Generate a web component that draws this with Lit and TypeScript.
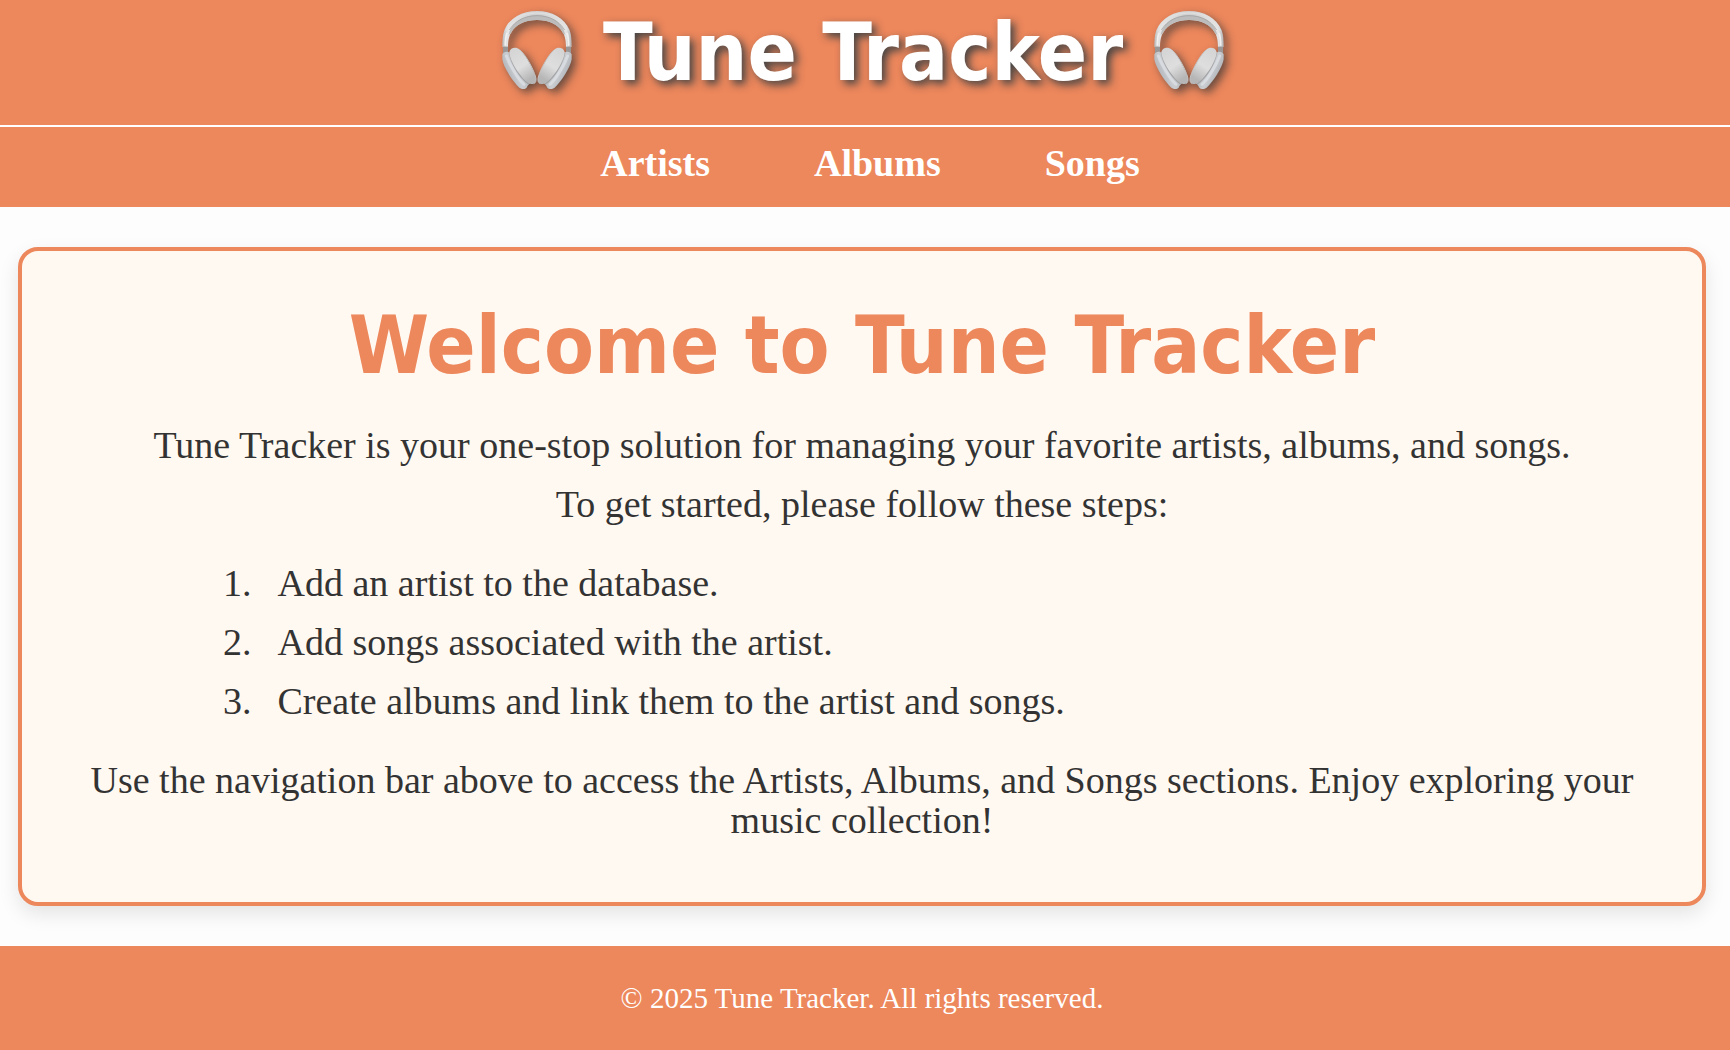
import { LitElement, html, css, svg } from "lit";
import { customElement } from "lit/decorators.js";

@customElement("headphones-icon")
export class HeadphonesIcon extends LitElement {
  static styles = css`
    :host {
      display: block;
      width: 72px;
      height: 80px;
      flex: none;
    }
    .icon {
      display: block;
      width: 100%;
      height: 100%;
      overflow: visible;
      filter: drop-shadow(4px 4px 4px rgba(51, 51, 51, 0.7));
    }
  `;

  private cup() {
    return svg`
      <path d="M63 140 H78 V162 H63 Z" fill="#9a9796" />
      <path d="M61 163 C65 153 78 153 86 160 L150 240 C150 248 138 252 134 263 C129 269 119 268 112 263 C94 247 64 202 61 178 Z" fill="url(#shell)" />
      <path d="M73 168 C82 193 106 235 126 253" fill="none" stroke="#dfe3e7" stroke-width="9" stroke-linecap="round" opacity="0.7" />
      <path d="M83 160 C90 194 114 232 139 251" fill="none" stroke="#a3a4a6" stroke-width="5" stroke-linecap="round" />
      <path d="M82 157 C85 142 103 140 113 149 C131 164 153 204 161 231 C165 246 158 253 147 252 C126 249 83 187 82 157 Z" fill="url(#pad)" />
      <path d="M113 149 C131 164 153 204 161 231 C164 242 161 249 155 251" fill="none" stroke="#c4c2c1" stroke-width="3" />
    `;
  }

  render() {
    return html`
      <svg class="icon" viewBox="57 30 216 240" aria-hidden="true">
        <defs>
          <linearGradient id="band" x1="0" y1="0" x2="1" y2="0">
            <stop offset="0" stop-color="#bcbcbd" />
            <stop offset="0.08" stop-color="#e6e6e6" />
            <stop offset="0.5" stop-color="#d0d0d1" />
            <stop offset="0.92" stop-color="#e6e6e6" />
            <stop offset="1" stop-color="#b4b4b5" />
          </linearGradient>
          <linearGradient id="shell" x1="0" y1="0.6" x2="0.7" y2="0.2">
            <stop offset="0" stop-color="#a6a9ad" />
            <stop offset="0.5" stop-color="#c9ccd0" />
            <stop offset="1" stop-color="#b4b6b8" />
          </linearGradient>
          <linearGradient id="pad" x1="0" y1="0" x2="0.5" y2="1">
            <stop offset="0" stop-color="#d4d3d3" />
            <stop offset="0.6" stop-color="#dfdede" />
            <stop offset="1" stop-color="#b7b6b6" />
          </linearGradient>
        </defs>
        <path d="M61 141 C61 122 62 103 67 91 C83 53 120 33 165 33 C210 33 247 53 263 91 C268 103 269 122 269 141 L252 143 C252 127 250 109 243 99 C229 72 200 60 165 60 C130 60 101 72 87 99 C80 109 78 127 78 143 Z" fill="url(#band)" />
        <path d="M80 106 C86 70 121 46 165 46 C209 46 244 70 250 106 L243 99 C229 72 200 60 165 60 C130 60 101 72 87 99 Z" fill="#bdbcbc" />
        <path d="M82 90 C100 61 130 47 165 47 C200 47 230 61 248 90" fill="none" stroke="#9c9b9b" stroke-width="2" />
        <path d="M71 92 C89 52 125 39 165 39 C205 39 241 52 259 92" fill="none" stroke="#e0e0e0" stroke-width="4" opacity="0.8" />
        <path d="M70 137 C70 121 71 109 75 98 M260 137 C260 121 259 109 255 98" fill="none" stroke="#f0f0f0" stroke-width="5" />
        <g>${this.cup()}</g>
        <g transform="translate(330 0) scale(-1 1)">${this.cup()}</g>
      </svg>
    `;
  }
}

@customElement("app-root")
export class AppRoot extends LitElement {
  static styles = css`
    :host {
      display: flex;
      flex-direction: column;
      min-height: 100vh;
      background: #fdfdfd;
      color: #333;
      font-family: "Liberation Serif", "Times New Roman", serif;
      font-size: 38px;
      line-height: 40px;
      --coral: #ed875c;
    }
    h1,
    h2,
    p,
    ul,
    ol {
      margin: 0;
      padding: 0;
      list-style: none;
    }
    .banner {
      display: flex;
      justify-content: center;
      gap: 30px;
      padding: 10px 4px 33px 0;
      background: var(--coral);
      border-bottom: 2px solid #fff;
    }
    .title,
    .heading {
      font-family: "DejaVu Sans Condensed", Tahoma, "DejaVu Sans", sans-serif;
      font-size: 81px;
      line-height: 80px;
      font-weight: 700;
    }
    .title {
      padding-top: 2px;
      color: #fff;
      text-shadow: 4px 4px 8px #444;
    }
    .nav {
      padding: 16px 0 24px 10px;
      background: var(--coral);
    }
    .links {
      display: flex;
      justify-content: center;
      gap: 104px;
    }
    .link {
      color: #fff;
      font-weight: 700;
      text-decoration: none;
    }
    .card {
      margin: 40px 24px 40px 18px;
      padding: 54px 40px 62px;
      border: 4px solid var(--coral);
      border-radius: 20px;
      background: #fff9f1;
      box-shadow: 0 8px 20px rgba(0, 0, 0, 0.1);
      text-align: center;
    }
    .heading {
      color: var(--coral);
      margin-bottom: 40px;
    }
    .lead {
      margin-top: 19px;
    }
    .steps {
      display: flex;
      flex-direction: column;
      gap: 19px;
      margin: 39px 0 39px 161px;
      text-align: left;
      counter-reset: step;
    }
    .step {
      display: flex;
      gap: 26px;
      counter-increment: step;
    }
    .step::before {
      content: counter(step) ".";
    }
    .footer {
      flex: 1;
      padding: 37px 6px 37px 0;
      background: var(--coral);
      color: #fff;
      font-size: 29px;
      line-height: 30px;
      text-align: center;
    }
  `;

  private links = ["Artists", "Albums", "Songs"];
  private steps = [
    "Add an artist to the database.",
    "Add songs associated with the artist.",
    "Create albums and link them to the artist and songs.",
  ];

  render() {
    return html`
      <header class="banner">
        <headphones-icon></headphones-icon>
        <h1 class="title">Tune Tracker</h1>
        <headphones-icon></headphones-icon>
      </header>
      <nav class="nav">
        <ul class="links">
          ${this.links.map(
            (name) => html`<li><a class="link" href="#${name.toLowerCase()}">${name}</a></li>`
          )}
        </ul>
      </nav>
      <main class="card">
        <h2 class="heading">Welcome to Tune Tracker</h2>
        <p>Tune Tracker is your one-stop solution for managing your favorite artists, albums, and songs.</p>
        <p class="lead">To get started, please follow these steps:</p>
        <ol class="steps">
          ${this.steps.map((text) => html`<li class="step">${text}</li>`)}
        </ol>
        <p>
          Use the navigation bar above to access the Artists, Albums, and Songs sections. Enjoy exploring your music
          collection!
        </p>
      </main>
      <footer class="footer">
        <p>© 2025 Tune Tracker. All rights reserved.</p>
      </footer>
    `;
  }
}
